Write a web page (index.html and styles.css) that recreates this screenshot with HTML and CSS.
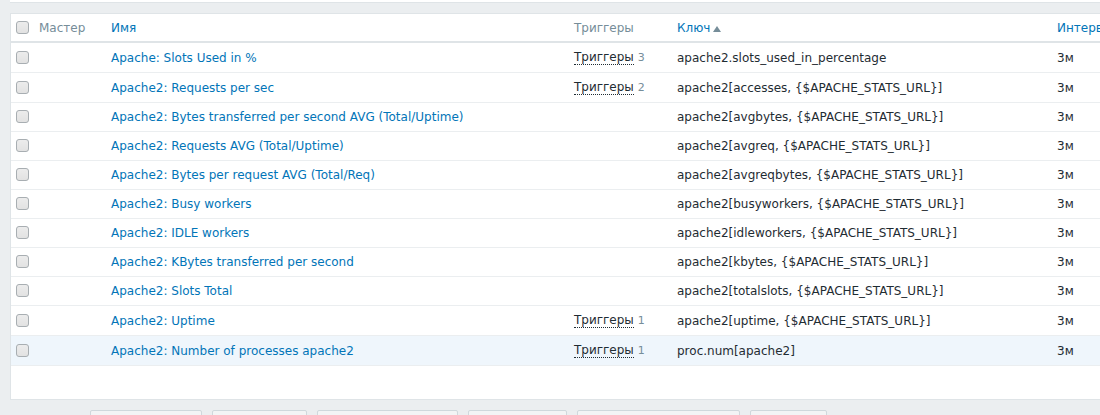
FILE: index.html
```html
<!DOCTYPE html>
<html lang="ru">
<head>
<meta charset="utf-8">
<title>Элементы данных</title>
<link rel="stylesheet" href="styles.css">
</head>
<body>
<div class="topbar"></div>
<div class="panel">
  <table class="list">
    <colgroup>
      <col class="c-check"><col class="c-master"><col class="c-name"><col class="c-trig"><col class="c-key"><col class="c-int">
    </colgroup>
    <thead>
      <tr>
        <th><span class="cb"></span></th>
        <th class="muted">Мастер</th>
        <th><a class="link">Имя</a></th>
        <th class="muted">Триггеры</th>
        <th><a class="link">Ключ</a><span class="arrow-up"></span></th>
        <th><a class="link">Интервал</a></th>
      </tr>
    </thead>
    <tbody>
      <tr><td><span class="cb"></span></td><td></td><td><a class="link">Apache: Slots Used in %</a></td><td><span class="trig">Триггеры</span> <span class="count">3</span></td><td>apache2.slots_used_in_percentage</td><td>3м</td></tr>
      <tr><td><span class="cb"></span></td><td></td><td><a class="link">Apache2: Requests per sec</a></td><td><span class="trig">Триггеры</span> <span class="count">2</span></td><td>apache2[accesses, {$APACHE_STATS_URL}]</td><td>3м</td></tr>
      <tr><td><span class="cb"></span></td><td></td><td><a class="link">Apache2: Bytes transferred per second AVG (Total/Uptime)</a></td><td></td><td>apache2[avgbytes, {$APACHE_STATS_URL}]</td><td>3м</td></tr>
      <tr><td><span class="cb"></span></td><td></td><td><a class="link">Apache2: Requests AVG (Total/Uptime)</a></td><td></td><td>apache2[avgreq, {$APACHE_STATS_URL}]</td><td>3м</td></tr>
      <tr><td><span class="cb"></span></td><td></td><td><a class="link">Apache2: Bytes per request AVG (Total/Req)</a></td><td></td><td>apache2[avgreqbytes, {$APACHE_STATS_URL}]</td><td>3м</td></tr>
      <tr><td><span class="cb"></span></td><td></td><td><a class="link">Apache2: Busy workers</a></td><td></td><td>apache2[busyworkers, {$APACHE_STATS_URL}]</td><td>3м</td></tr>
      <tr><td><span class="cb"></span></td><td></td><td><a class="link">Apache2: IDLE workers</a></td><td></td><td>apache2[idleworkers, {$APACHE_STATS_URL}]</td><td>3м</td></tr>
      <tr><td><span class="cb"></span></td><td></td><td><a class="link">Apache2: KBytes transferred per second</a></td><td></td><td>apache2[kbytes, {$APACHE_STATS_URL}]</td><td>3м</td></tr>
      <tr><td><span class="cb"></span></td><td></td><td><a class="link">Apache2: Slots Total</a></td><td></td><td>apache2[totalslots, {$APACHE_STATS_URL}]</td><td>3м</td></tr>
      <tr><td><span class="cb"></span></td><td></td><td><a class="link">Apache2: Uptime</a></td><td><span class="trig">Триггеры</span> <span class="count">1</span></td><td>apache2[uptime, {$APACHE_STATS_URL}]</td><td>3м</td></tr>
      <tr class="hover"><td><span class="cb"></span></td><td></td><td><a class="link">Apache2: Number of processes apache2</a></td><td><span class="trig">Триггеры</span> <span class="count">1</span></td><td>proc.num[apache2]</td><td>3м</td></tr>
    </tbody>
  </table>
</div>
<div class="actions">
  <button class="btn w1" aria-label="Активировать"></button>
  <button class="btn w2" aria-label="Проверить"></button>
  <button class="btn w3" aria-label="Деактивировать"></button>
  <button class="btn w4" aria-label="Копировать"></button>
  <button class="btn w5" aria-label="Массовое обновление"></button>
  <button class="btn w6" aria-label="Удалить"></button>
</div>
</body>
</html>
```
FILE: styles.css
```css
html, body {
  margin: 0;
  padding: 0;
}
body {
  background: #ebeef0;
  font-family: "DejaVu Sans", "Liberation Sans", sans-serif;
  font-size: 12px;
  color: #1f2c33;
  width: 1100px;
  height: 415px;
  overflow: hidden;
}
.topbar {
  margin-left: 10px;
  height: 2px;
  background: #fff;
  border-bottom: 1px solid #dfe4e7;
}
.panel {
  margin: 10px 0 0 10px;
  width: 1200px;
  background: #fff;
  border: 1px solid #dfe4e7;
  padding-bottom: 33px;
}
.list {
  border-collapse: collapse;
  table-layout: fixed;
  width: 1200px;
}
.c-check { width: 23px; }
.c-master { width: 72px; }
.c-name { width: 463px; }
.c-trig { width: 103px; }
.c-key { width: 380px; }
.c-int { width: 159px; }
.list th {
  text-align: left;
  font-weight: normal;
  padding: 7px 5px 6px;
  line-height: 14px;
  border-bottom: 2px solid #dfe4e7;
  white-space: nowrap;
  overflow: hidden;
}
.list td {
  padding: 7px 5px;
  line-height: 14px;
  border-bottom: 1px solid #ebeef0;
  white-space: nowrap;
  overflow: hidden;
}
.list tr.hover td {
  background: #eff6fc;
}
.muted {
  color: #768d99;
}
.link {
  color: #0275b8;
  text-decoration: none;
}
.cb {
  display: inline-block;
  width: 11px;
  height: 11px;
  border: 1px solid #a8aeb2;
  border-radius: 3px;
  background: linear-gradient(#ececec, #e2e2e2);
  vertical-align: -2px;
}
.arrow-up {
  display: inline-block;
  width: 0;
  height: 0;
  border-left: 4px solid transparent;
  border-right: 4px solid transparent;
  border-bottom: 6px solid #768d99;
  margin-left: 3px;
  vertical-align: 0;
}
.trig {
  display: inline-block;
  line-height: 14px;
  border-bottom: 1px dotted #1f2c33;
  color: #1f2c33;
}
.count {
  color: #768d99;
  font-size: 11px;
}
.actions {
  display: flex;
  gap: 10px;
  margin: 10px 0 0 90px;
}
.btn {
  height: 24px;
  padding: 0;
  background: #f2f4f5;
  border: 1px solid #cfd8dc;
  border-radius: 2px;
}
.w1 { width: 112px; }
.w2 { width: 95px; }
.w3 { width: 141px; }
.w4 { width: 99px; }
.w5 { width: 163px; }
.w6 { width: 77px; }
```
